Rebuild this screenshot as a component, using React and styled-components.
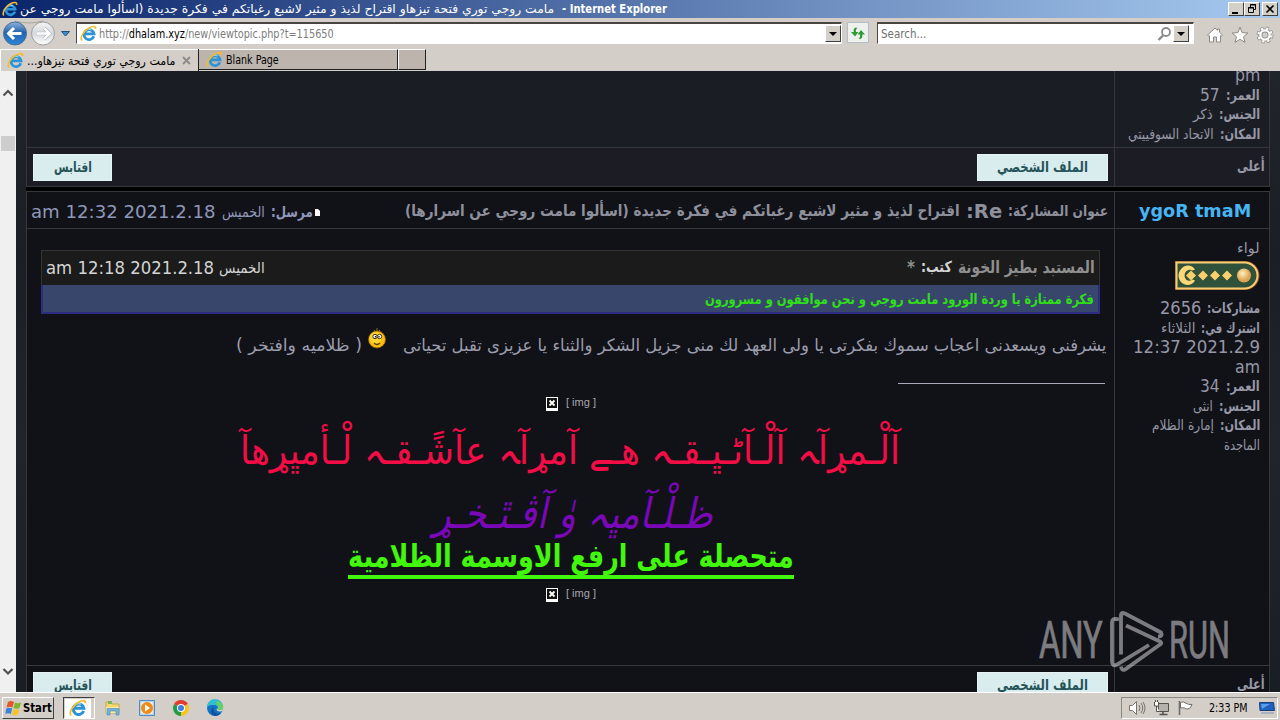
import React, { useLayoutEffect, useRef, useState } from "react";
import styled, { createGlobalStyle } from "styled-components";

const users = [
  { label: "مشاركات:", lw: 53, value: "2656", w: 41, size: 17 },
  { label: "اشترك في:", lw: 59, value: "الثلاثاء", w: 34 },
  { value: "2021.2.9 12:37", w: 127, size: 17 },
  { value: "am", w: 25, size: 17 },
  { label: "العمر:", lw: 34, value: "34", w: 20, size: 17 },
  { label: "الجنس:", lw: 41, value: "انثى", w: 20 },
  { label: "المكان:", lw: 40, value: "إمارة الظلام", w: 62 },
  { value: "الماجدة", w: 36 },
];

const prevUser = [
  { value: "pm", w: 25, size: 17 },
  { label: "العمر:", lw: 34, value: "57", w: 20, size: 17 },
  { label: "الجنس:", lw: 41, value: "ذكر", w: 20 },
  { label: "المكان:", lw: 40, value: "الاتحاد السوفييتي", w: 86 },
];

const App = () => {
  return (
    <>
      <GlobalStyle />
      <Screen>
        <TitleBar />
        <AddressBar />
        <Tabs />
        <View>
          <ScrollBar />
          <Forum>
            <Post $h={76}>
              <Main $bg="#1b1d24" />
              <Side $bg="#1b1d24" $top={-5}>
                <Info rows={prevUser} />
              </Side>
            </Post>
            <PostFooter bg="#1c1d24" h={38} />
            <Separator />
            <PostHeader />
            <Post $h={436}>
              <Main>
                <PostBody />
              </Main>
              <Side $top={9}>
                <SideLine>
                  <Fit w={23} h={20} size={15}>لواء</Fit>
                </SideLine>
                <Rank />
                <Info rows={users} />
              </Side>
            </Post>
            <PostFooter h={27} />
          </Forum>
          <Watermark />
        </View>
        <TaskBar />
      </Screen>
    </>
  );
};

// squeezes or stretches one line of text to a given width
const Fit = ({ w, h, size, dir = "rtl", children, ...rest }) => {
  const ref = useRef(null);
  const [scale, setScale] = useState(1);

  useLayoutEffect(() => {
    setScale(w / ref.current.offsetWidth);
  }, [w, size]);

  return (
    <FitBox $w={w} $h={h} $size={size} {...rest}>
      <FitText ref={ref} dir={dir} style={{ transform: `scaleX(${scale})` }}>
        {children}
      </FitText>
    </FitBox>
  );
};

const TitleBar = () => (
  <Title>
    <IeIcon size={16} />
    <Fit w={534} h={18} size={12}>
      مامت روجي توري فتحة تيزهاو اقتراح لذيذ و مثير لاشبع رغباتكم في فكرة جديدة (اسألوا مامت روجي عن
    </Fit>
    <TitleName>
      <Fit w={105} h={18} size={12} dir="ltr" $bold>- Internet Explorer</Fit>
    </TitleName>
    <WinButtons>
      <WinButton>
        <svg width="14" height="12"><path d="M3 9h6v2H3z" /></svg>
      </WinButton>
      <WinButton>
        <svg width="14" height="12" fill="none" stroke="#000">
          <path d="M5.500 4V1.500h5v5H9M5 2h6" /><path d="M3.500 4.500h5v5h-5zM3 5h6" />
        </svg>
      </WinButton>
      <WinButton $gap>
        <svg width="14" height="12" stroke="#000" strokeWidth="1.6"><path d="M3.500 2.500l7 7M10.500 2.500l-7 7" /></svg>
      </WinButton>
    </WinButtons>
  </Title>
);

const AddressBar = () => (
  <Nav>
    <svg width="74" height="32" viewBox="0 0 74 32">
      <defs>
        <linearGradient id="back" x2="0" y2="1">
          <stop offset="0" stopColor="#8fb4dc" />
          <stop offset=".45" stopColor="#2463ae" />
          <stop offset="1" stopColor="#2d87d8" />
        </linearGradient>
        <linearGradient id="fwd" x2="0" y2="1">
          <stop offset="0" stopColor="#f4f4f4" />
          <stop offset=".5" stopColor="#d5d9dd" />
          <stop offset="1" stopColor="#fff" />
        </linearGradient>
      </defs>
      <path d="M15 3Q29 7 43 3" fill="none" stroke="#aaa59e" />
      <circle cx="15" cy="15.500" r="11.500" fill="url(#back)" stroke="#4d6f98" />
      <path d="M21.500 15.500H9M14 10l-5.500 5.500L14 21" fill="none" stroke="#fff" strokeWidth="3" />
      <circle cx="43" cy="15.500" r="11.500" fill="url(#fwd)" stroke="#9c9d9f" />
      <path d="M36.500 15.500H49M44 10l5.500 5.500L44 21" fill="none" stroke="#b0b4b8" strokeWidth="3.600" />
      <path d="M36.500 15.500H49M44 10l5.500 5.500L44 21" fill="none" stroke="#fff" strokeWidth="2.400" />
      <path d="M61.500 13.500h8l-4 4.500z" fill="#3d8bd0" stroke="#234f7c" />
    </svg>
    <Field $w={766}>
      <IeIcon size={17} />
      <Url>
        <Fit w={235} h={20} size={12} dir="ltr">
          http://<b>dhalam.xyz</b>/new/viewtopic.php?t=115650
        </Fit>
      </Url>
      <DropButton />
    </Field>
    <Refresh>
      <svg width="18" height="18" viewBox="0 0 18 18" fill="#2f9b36">
        <path d="M7 3.500C4.500 4 4.500 6 4.800 8H2l4 4.500L9.500 8H7c-.3-2 0-3 1.500-4z" />
        <path d="M11 15c2.500-.5 2.500-2.500 2.200-4.500H16L12 6 8.500 10.500H11c.3 2 0 3-1.500 4z" />
      </svg>
    </Refresh>
    <Field $w={317}>
      <Search>
        <Fit w={45} h={20} size={12} dir="ltr">Search...</Fit>
      </Search>
      <svg width="16" height="18" viewBox="0 0 16 18" fill="none" stroke="#8b8b8b">
        <circle cx="9" cy="7" r="4" strokeWidth="1.800" />
        <path d="M6 10.500l-4.500 4.500" strokeWidth="2.400" />
      </svg>
      <DropButton />
      <FieldPad />
    </Field>
    <Tools>
      <svg width="18" height="18" viewBox="0 0 18 18">
        <path d="M1.500 9L9 2l2.500 2.300V3h2v3.200L16.500 9l-1.300 1.200-.7-.6V16h-4v-5h-3v5h-4V9.600l-.7.600z" fill="#fff" stroke="#8d8a86" />
      </svg>
      <svg width="18" height="18" viewBox="0 0 18 18">
        <path d="M9 1.200l2.200 5.500 5.600.3-4.300 3.700 1.500 5.700L9 13.300l-5 3.100 1.500-5.700L1.200 7l5.600-.3z" fill="#fff" stroke="#8d8a86" />
      </svg>
      <svg width="18" height="18" viewBox="0 0 18 18">
        <g fill="none">
          <circle cx="9" cy="9" r="6.500" stroke="#8d8a86" strokeWidth="4" strokeDasharray="2.900 2.200" />
          <circle cx="9" cy="9" r="4.600" stroke="#8d8a86" strokeWidth="4" />
          <circle cx="9" cy="9" r="6.500" stroke="#fff" strokeWidth="2.400" strokeDasharray="2.100 3" strokeDashoffset="-.4" />
          <circle cx="9" cy="9" r="4.600" stroke="#fff" strokeWidth="2.300" />
        </g>
      </svg>
    </Tools>
  </Nav>
);

const Tabs = () => (
  <TabRow>
    <Tab $w={198} $active>
      <IeIcon size={17} />
      <TabTitle $w={148}>
        <Fit w={148} h={20} size={12}>مامت روجي توري فتحة تيزهاو...</Fit>
      </TabTitle>
      <svg width="9" height="9" stroke="#8e8a85" strokeWidth="1.900"><path d="M1 1l7 7M8 1L1 8" /></svg>
    </Tab>
    <Tab $w={200}>
      <IeIcon size={17} />
      <TabTitle>
        <Fit w={53} h={20} size={12} dir="ltr">Blank Page</Fit>
      </TabTitle>
    </Tab>
    <Tab $w={28} />
  </TabRow>
);

const ScrollBar = () => (
  <Track>
    <svg width="16" height="16" fill="none" stroke="#505050" strokeWidth="2.200"><path d="M3.500 10.500L8 6l4.500 4.500" /></svg>
    <Thumb />
    <TrackEnd width="16" height="16" fill="none" stroke="#505050" strokeWidth="2.200"><path d="M3.500 6L8 10.500 12.500 6" /></TrackEnd>
  </Track>
);

const Info = ({ rows }) =>
  rows.map((a, i) => (
    <SideLine key={i}>
      <Fit w={a.w} h={19.5} size={a.size || 14}>{a.value}</Fit>
      {a.label && <Fit w={a.lw} h={19.5} size={14} $bold>{a.label}</Fit>}
    </SideLine>
  ));

const PostFooter = ({ bg, h }) => (
  <Post $h={h} $line>
    <Main $bg={bg}>
      <Buttons>
        <Button $w={79}>
          <Fit w={38} h={24} size={14} $bold>اقتابس</Fit>
        </Button>
        <Button $w={131}>
          <Fit w={91} h={24} size={15} $bold>الملف الشخصي</Fit>
        </Button>
      </Buttons>
    </Main>
    <Side $bg={bg} $top={7} $right={4}>
      <SideLine>
        <Fit w={28} h={22} size={15} $bold>أعلى</Fit>
      </SideLine>
    </Side>
  </Post>
);

const PostHeader = () => (
  <Post $h={37} $line>
    <Main>
      <HeadRow>
        <Posted>
          <Fit w={185} h={38} size={18}>2021.2.18 12:32 am</Fit>
          <Fit w={43} h={38} size={15}>الخميس</Fit>
          <Fit w={42} h={38} size={15} $bold>مرسل:</Fit>
          <svg width="6" height="9"><path d="M0 1h3l2 2v5H0z" fill="#fff" /></svg>
        </Posted>
        <Subject>
          <Fit w={100} h={36} size={15} $bold>عنوان المشاركة:</Fit>
          <Fit w={36} h={36} size={19} $bold>Re:</Fit>
          <Fit w={555} h={36} size={16} $bold>
            اقتراح لذيذ و مثير لاشبع رغباتكم في فكرة جديدة (اسألوا مامت روجي عن اسرارها)
          </Fit>
        </Subject>
      </HeadRow>
    </Main>
    <Side $user>
      <Fit w={112} h={38} size={17} dir="ltr" $bold>ygoR tmaM</Fit>
    </Side>
  </Post>
);

const PostBody = () => (
  <Body>
    <Quote>
      <QuoteHead>
        <QuoteDate>
          <Fit w={168} h={34} size={18}>2021.2.18 12:18 am</Fit>
          <Fit w={46} h={34} size={15}>الخميس</Fit>
        </QuoteDate>
        <QuoteAuthor>
          <Fit w={137} h={32} size={17} $bold>المستبد بطيز الخونة</Fit>
          <Wrote>
            <Fit w={31} h={32} size={15} $bold>كتب:</Fit>
          </Wrote>
          <Fit w={8} h={32} size={17} $bold>*</Fit>
        </QuoteAuthor>
      </QuoteHead>
      <QuoteText>
        <Fit w={389} h={28} size={14} $bold>
          فكرة ممتازة يا وردة الورود مامت روجي و نحن موافقون و مسرورون
        </Fit>
      </QuoteText>
    </Quote>
    <Message>
      <Fit w={703} h={30} size={17}>
        يشرفنى ويسعدنى اعجاب سموك بفكرتى يا ولى العهد لك منى جزيل الشكر والثناء يا عزيزى تقبل تحياتى
      </Fit>
      <Smile />
      <Fit w={126} h={30} size={17}>( ظلاميه وافتخر )</Fit>
    </Message>
    <Rule />
    <MissingImage $top={10} />
    <Signature $h={69} $x={240} $top={6} $color="#f20d46">
      <Fit w={660} h={69} size={39}>
        {"آلْـمړآ\u200dہ آلْـآٹـڀـقـہ هـے آمړآ\u200dہ عآشًـقـہ لْـأمڀړهآ"}
      </Fit>
    </Signature>
    <Signature $h={58} $x={433} $color="#7a08b8">
      <Fit w={280} h={58} size={42}><i>ظـلْـآمڀہ وٰ آڤـٿـخـړ</i></Fit>
    </Signature>
    <Signature $h={36} $x={348} $color="#41f70b" $line>
      <Fit w={446} h={26} size={32} $bold>متحصلة على ارفع الاوسمة الظلامية</Fit>
    </Signature>
    <MissingImage $top={6} />
  </Body>
);

const MissingImage = ({ $top }) => (
  <Missing $top={$top}>
    <svg width="12" height="14">
      <path d="M0 0h12v14H0z" fill="#fff" />
      <path d="M1 1h10v10H1z" fill="#111" />
      <path d="M3.500 3.500l5 5M8.500 3.500l-5 5" stroke="#fff" strokeWidth="1.800" />
    </svg>
    <Fit w={30} h={16} size={11} dir="ltr">[ img ]</Fit>
  </Missing>
);

const Smile = () => (
  <SmileSvg width="20" height="22" viewBox="0 0 20 22">
    <path d="M7 3l1.500 1.500M10 1v3M13 3l-1.500 1.500" stroke="#8f6c1b" />
    <circle cx="10" cy="12.500" r="8.500" fill="#f8bb10" stroke="#8a5b08" strokeWidth=".7" />
    <circle cx="8.500" cy="11" r="6" fill="#ffe13c" opacity=".7" />
    <circle cx="8" cy="9.500" r="2.200" fill="#fff" stroke="#43320e" />
    <circle cx="12.500" cy="9.500" r="2.200" fill="#fff" stroke="#43320e" />
    <path d="M8.500 9v1.500M12 9v1.500" stroke="#222" strokeWidth="1.300" />
    <path d="M7 16q3 3 6 0" fill="none" stroke="#60400a" strokeWidth="1.300" />
  </SmileSvg>
);

const Rank = () => (
  <RankSvg width="85" height="29" viewBox="0 0 85 29">
    <defs>
      <radialGradient id="ball" cx=".4" cy=".35">
        <stop offset="0" stopColor="#fff0bd" />
        <stop offset="1" stopColor="#dda552" />
      </radialGradient>
    </defs>
    <path d="M0 0h70a14 14 0 0 1 0 29H0z" fill="#8a4a1f" />
    <path d="M1.500 1.500h68a13 13 0 0 1 0 26h-68z" fill="#31523a" stroke="#f9cd74" strokeWidth="2" />
    <path d="M20 8.500C17 3.500 10 3.500 6.500 7.500c-4 4.500-4 10 0 14 4 4 11 3 13.500-2l-2.500-1c-2.500 2-6 1.500-7-1-1.500-2-1-6 1-7.500 2-1.500 4.500-1.500 6-.5z" fill="#fbd877" />
    <path d="M16 9.500l5 5-5 5-5-5zM28 9.500l5 5-5 5-5-5zM40 9.500l5 5-5 5-5-5zM52 9.500l5 5-5 5-5-5z" fill="#fbd06c" />
    <circle cx="69" cy="14.500" r="7" fill="url(#ball)" />
  </RankSvg>
);

const IeIcon = ({ size }) => (
  <svg width={size} height={size} viewBox="0 0 17 17" fill="none">
    <path d="M13.800 11.300A5 5 0 1 1 14 8.800H5" stroke="#2b93d8" strokeWidth="2.800" />
    <path d="M5.500 5.500Q8 3.300 11.500 5" stroke="#8fd5f7" strokeWidth="1.200" />
    <path d="M2 15.500C-.5 12.500 4 5.500 9 3c4-2.200 7-2 6.500 1" stroke="#f1bd2b" strokeWidth="1.700" />
  </svg>
);

const Watermark = () => (
  <Mark>
    <Fit w={64} h={62} size={52} dir="ltr">ANY</Fit>
    <svg width="56" height="64" viewBox="0 0 56 64" fill="none" stroke="currentColor" strokeWidth="3.800">
      <path d="M9 11V9Q4 8 4 12.500V51q0 6 5 3.500L41 35M13 44.500V5q0-3 4-1.500L53 22.500q2 4-3 4M18 15.500l34 16q2.500 1.500 0 3L17 59.500q-3.500 1.500-4-3" />
    </svg>
    <Fit w={61} h={62} size={52} dir="ltr">RUN</Fit>
  </Mark>
);

const TaskBar = () => (
  <Task>
    <Start>
      <svg width="17" height="16" viewBox="0 0 17 16">
        <path d="M3 2q3-2 6 0L7.500 7.500q-3-1.500-6 0z" fill="#e4572a" />
        <path d="M10 2.500q3 1.500 6 0L14.500 8q-3 1.500-6 0z" fill="#7db52f" />
        <path d="M1.200 8.500q3-1.500 6 0L5.800 14q-3-1.500-5.500 0z" fill="#3a83d6" />
        <path d="M8.300 9q3 1.500 6 0L13 14.500q-3 1.500-6 0z" fill="#f7c325" />
      </svg>
      <Fit w={29} h={18} size={12} dir="ltr" $bold>Start</Fit>
    </Start>
    <Running>
      <RunningInner><IeIcon size={18} /></RunningInner>
    </Running>
    <Launch>
      <svg width="18" height="18" viewBox="0 0 18 18">
        <path d="M2 3h5l1 2h7v9H2z" fill="#f3d873" stroke="#c6a84a" />
        <path d="M4 2h4v3H4z" fill="#74b956" />
        <path d="M2 8h13v6H2z" fill="#fae9a0" />
        <path d="M3 9.500h12V16h-3v-4H6v4H3z" fill="#72b3dc" stroke="#4b88b4" strokeWidth=".6" />
      </svg>
      <svg width="18" height="18" viewBox="0 0 18 18">
        <path d="M1.500 1.500h15v15h-15z" fill="#b6d5ef" stroke="#4f89bd" />
        <path d="M3.500 3.500h11v11h-11z" fill="#fff" />
        <circle cx="9" cy="9" r="6" fill="#f28b16" />
        <path d="M7 5.500L12 9l-5 3.500z" fill="#fff" />
      </svg>
      <svg width="18" height="18" viewBox="0 0 18 18">
        <path d="M9 9L2.100 5A8 8 0 0 1 15.900 5z" fill="#df3d30" />
        <path d="M9 9l6.900-4A8 8 0 0 1 9 17z" fill="#f8c51d" />
        <path d="M9 9v8A8 8 0 0 1 2.100 5z" fill="#27994a" />
        <circle cx="9" cy="9" r="4" fill="#fff" />
        <circle cx="9" cy="9" r="3" fill="#3d7de4" />
      </svg>
      <svg width="18" height="18" viewBox="0 0 18 18">
        <circle cx="9" cy="9" r="8" fill="#1572c4" />
        <path d="M1 8a8 8 0 0 1 16 0c1 4-4 5-6 3 2-3 0-5-3-5-3-.2-5 0-7 2z" fill="#35bdd0" />
        <path d="M11 2c4 1 7 4 6 7s-4 3-6 2c2-3 1-5-1-6z" fill="#67cf65" />
        <path d="M8 8c-2 4 2 8 7 6-1.500 2-4 3-6 3-4-1-6-6-1-9z" fill="#0d529c" />
        <path d="M17.500 11c-2 2-5 2-6.500.5-1-1 0-1.500 0-2.500 0 2 3 3 6.500 1z" fill="#d4d0c8" />
      </svg>
    </Launch>
    <Tray>
      <svg width="18" height="16" viewBox="0 0 18 16" fill="none" stroke="#77736d">
        <path d="M1.500 5.500h3l4-4v13l-4-4h-3z" fill="#fff" />
        <path d="M11 5q2 3 0 6M13 3q3.500 5 0 10M15 2q4 6 0 12" />
      </svg>
      <svg width="17" height="16" viewBox="0 0 17 16" fill="none" stroke="#55524e">
        <path d="M5.500 3.500h10v8h-10z" fill="#b4b1ad" />
        <path d="M6.500 14.500h8M10 12v2" strokeWidth="1.600" />
        <path d="M1.500 2v4h4V2M2.500 0v2M4.500 0v2M3.500 6v5.500h3" fill="#fff" />
      </svg>
      <svg width="17" height="16" viewBox="0 0 17 16" stroke="#716d68">
        <path d="M2.500 1v14" strokeWidth="1.600" />
        <path d="M3.500 2.500q3-1.500 5 .5 3 2 6.500 1.500-1 4-4 4.500-2 .3-3.500-1-2-.5-4 0z" fill="#fff" />
      </svg>
      <Clock><Fit w={39} h={18} size={12} dir="ltr">2:33 PM</Fit></Clock>
      <svg width="16" height="14" viewBox="0 0 16 14">
        <path d="M.5 1.500h14l1 8H1z" fill="#1f5fc0" stroke="#16407e" />
        <path d="M2 3h9L3 8z" fill="#5b9cec" />
        <path d="M2 12h13" stroke="#7c95ba" />
      </svg>
    </Tray>
  </Task>
);

const GlobalStyle = createGlobalStyle`
  * { box-sizing: border-box; }
  body { margin: 0; background: #111118; }
  svg { display: block; flex: none; }
`;

const Screen = styled.div`
  width: 1280px;
  height: 720px;
  overflow: hidden;
  display: flex;
  flex-direction: column;
  background: #d4d0c8;
  font-family: "DejaVu Sans", sans-serif;
`;

const FitBox = styled.span`
  display: block;
  flex: none;
  direction: ltr;
  text-align: left;
  width: ${(p) => p.$w}px;
  height: ${(p) => p.$h}px;
  line-height: ${(p) => p.$h}px;
  font-size: ${(p) => p.$size}px;
  font-weight: ${(p) => (p.$bold ? 700 : 400)};
  white-space: nowrap;
`;

const FitText = styled.span`
  display: inline-block;
  transform-origin: 0 50%;
  b { font-weight: 400; color: #000; }
`;

const Title = styled.div`
  height: 18px;
  flex: none;
  display: flex;
  align-items: center;
  padding: 0 2px 0 2px;
  gap: 2px;
  color: #fff;
  background: linear-gradient(90deg, #0a246a, #a6caf0);
`;

const TitleName = styled.div`
  padding-left: 6px;
  font-family: "DejaVu Sans Condensed", sans-serif;
`;

const WinButtons = styled.div`
  display: flex;
  margin-left: auto;
`;

const WinButton = styled.div`
  width: 16px;
  height: 14px;
  margin-left: ${(p) => (p.$gap ? 2 : 0)}px;
  background: #d4d0c8;
  border: 1px solid;
  border-color: #fff #404040 #404040 #fff;
`;

const Nav = styled.div`
  height: 32px;
  flex: none;
  display: flex;
  align-items: flex-start;
  padding: 0 6px 0 0;
  background: #d4cec8;
  font-family: "DejaVu Sans Condensed", sans-serif;
`;

const Field = styled.div`
  width: ${(p) => p.$w}px;
  height: 22px;
  margin: 4px 0 0 2px;
  padding-left: 3px;
  display: flex;
  align-items: center;
  background: #fff;
  border: 1px solid;
  border-top: 2px solid #494542;
  border-color: #494542 #fff #fff #494542;
`;

const Url = styled.div`
  flex: 1;
  padding-left: 2px;
  color: #7c7c7c;
`;

const Search = styled.div`
  flex: 1;
  color: #707070;
`;

const DropButton = styled.div`
  width: 16px;
  height: 17px;
  background: #d4d0c8;
  border: 1px solid;
  border-color: #fff #404040 #404040 #fff;
  display: flex;
  align-items: center;
  justify-content: center;
  &::after {
    content: "";
    border: 4px solid transparent;
    border-top-color: #000;
    border-bottom: 0;
  }
`;

const FieldPad = styled.div`
  width: 4px;
`;

const Refresh = styled.div`
  width: 22px;
  height: 21px;
  margin: 4px 6px 0 5px;
  display: flex;
  align-items: center;
  justify-content: center;
  background: #eef0ee;
  border: 1px solid #b4bcc6;
`;

const Tools = styled.div`
  display: flex;
  gap: 7px;
  margin: 8px 0 0 auto;
`;

const TabRow = styled.div`
  height: 21px;
  flex: none;
  display: flex;
  background: #d4cec8;
  font-family: "DejaVu Sans Condensed", sans-serif;
`;

const Tab = styled.div`
  width: ${(p) => p.$w}px;
  height: ${(p) => (p.$active ? 22 : 21)}px;
  margin-top: -1px;
  padding-left: ${(p) => (p.$active ? 6 : 7)}px;
  display: flex;
  align-items: center;
  background: ${(p) => (p.$active ? "#d4cec8" : "#bcb4ad")};
  border-style: solid;
  border-width: 1px ${(p) => (p.$active ? 0 : 1)}px ${(p) => (p.$active ? 0 : 1)}px 1px;
  border-color: #fff #222 #222 #fff;
  box-shadow: ${(p) => (p.$active ? "1px 0 #222" : "none")};
  z-index: ${(p) => (p.$active ? 1 : 0)};
`;

const TabTitle = styled.div`
  padding-left: 3px;
  margin-right: 7px;
  width: ${(p) => (p.$w ? p.$w + 3 + "px" : "auto")};
`;

const View = styled.div`
  position: relative;
  height: 621px;
  flex: none;
  display: flex;
  overflow: hidden;
  background: linear-gradient(180deg, #20242b, #1b1e25 30%, #22242b 60%, #191e25);
`;

const Track = styled.div`
  width: 16px;
  height: 621px;
  padding: 14px 0 13px;
  display: flex;
  flex-direction: column;
  background: #f0f0f0;
`;

const Thumb = styled.div`
  width: 14px;
  height: 15px;
  margin: 35px 1px 0;
  background: #cdcdcd;
`;

const TrackEnd = styled.svg`
  margin-top: auto;
`;

const Forum = styled.div`
  width: 1244px;
  margin-left: 10px;
  flex: none;
  color: #9b9dac;
`;

const Post = styled.div`
  height: ${(p) => p.$h}px;
  display: flex;
  border-top: ${(p) => (p.$line ? "1px solid #36373d" : "0")};
  overflow: hidden;
  & + & {
    box-sizing: content-box;
    border-top: 1px solid #36373d;
  }
`;

const Main = styled.div`
  width: 1088px;
  flex: none;
  background: ${(p) => p.$bg || "#111118"};
  border-left: 1px solid #36373d;
`;

const Side = styled.div`
  width: 156px;
  flex: none;
  display: flex;
  flex-direction: column;
  align-items: ${(p) => (p.$user ? "center" : "flex-end")};
  padding: ${(p) => (p.$user ? "0 0 0 5px" : `0 ${p.$right || 9}px 0 0`)};
  background: ${(p) => p.$bg || "#111118"};
  border: solid #36373d;
  border-width: 0 1px;
  color: ${(p) => (p.$user ? "#46b5f2" : "#9698a6")};
  &::before {
    content: "";
    flex: none;
    height: ${(p) => Math.max(p.$top || 0, 0)}px;
    margin-top: ${(p) => Math.min(p.$top || 0, 0)}px;
  }
`;

const SideLine = styled.div`
  display: flex;
  gap: 6px;
`;

const Separator = styled.div`
  height: 5px;
  background: #000;
  border-top: 1px solid #36373d;
`;

const Buttons = styled.div`
  display: flex;
  justify-content: space-between;
  padding: 6px 6px 0;
`;

const Button = styled.div`
  width: ${(p) => p.$w}px;
  height: 27px;
  flex: none;
  display: flex;
  justify-content: center;
  background: #d9ecee;
  border: 1px solid #e6f2f3;
  color: #255459;
`;

const HeadRow = styled.div`
  display: flex;
  justify-content: space-between;
  padding: 1px 6px 0 4px;
`;

const Posted = styled.div`
  display: flex;
  align-items: center;
  gap: 6px;
  color: #8f98b8;
  svg { margin-left: -4px; }
`;

const Subject = styled.div`
  display: flex;
  direction: rtl;
  gap: 6px;
  color: #8e909b;
`;

const Body = styled.div`
  padding: 21px 0 0 14px;
`;

const Quote = styled.div`
  width: 1059px;
  height: 64px;
  border: 1px solid #35352f;
  background: #1b1b1b;
`;

const QuoteHead = styled.div`
  height: 34px;
  display: flex;
  justify-content: space-between;
  padding: 0 4px;
  color: #8f8f8f;
`;

const QuoteDate = styled.div`
  display: flex;
  gap: 5px;
  color: #d4d4d4;
  font-family: "DejaVu Sans Condensed", sans-serif;
`;

const QuoteAuthor = styled.div`
  display: flex;
  direction: rtl;
  gap: 6px;
`;

const Wrote = styled.div`
  color: #d4d4d4;
`;

const QuoteText = styled.div`
  height: 29px;
  margin: 0 -1px;
  padding-right: 4px;
  display: flex;
  justify-content: flex-end;
  background: #38466c;
  border: 2px solid #2c2c80;
  border-top: 0;
  color: #2fe016;
`;

const Message = styled.div`
  display: flex;
  direction: rtl;
  padding-right: 8px;
  margin-top: 16px;
  height: 30px;
`;

const SmileSvg = styled.svg`
  margin: -3px 16px 0 5px;
`;

const Rule = styled.div`
  width: 207px;
  height: 1px;
  margin: 23px 0 0 857px;
  background: #a9abb8;
`;

const Missing = styled.div`
  display: flex;
  align-items: center;
  gap: 8px;
  height: 16px;
  margin: ${(p) => p.$top}px 0 0 505px;
  color: #a8a8ad;
  font-family: "Liberation Sans", sans-serif;
  svg { margin-top: 3px; }
`;

const Signature = styled.div`
  height: ${(p) => p.$h}px;
  width: fit-content;
  margin: ${(p) => p.$top || 0}px 0 0 ${(p) => p.$x - 41}px;
  color: ${(p) => p.$color};
  border-bottom: ${(p) => (p.$line ? "4px solid #41f70b" : "0")};
`;

const RankSvg = styled.svg`
  margin: 3px 0 9px;
`;

const Mark = styled.div`
  position: absolute;
  left: 1039px;
  top: 539px;
  display: flex;
  gap: 5px;
  color: #fff;
  opacity: 0.45;
  font-family: Roboto, sans-serif;
  -webkit-text-stroke: 0.6px #fff;
`;

const Task = styled.div`
  height: 28px;
  flex: none;
  display: flex;
  align-items: center;
  padding: 3px 2px 1px;
  border-top: 1px solid #fff;
  background: #d4cec8;
`;

const Start = styled.div`
  width: 52px;
  height: 22px;
  display: flex;
  align-items: center;
  gap: 1px;
  padding-left: 2px;
  border: 1px solid;
  border-color: #fff #404040 #404040 #fff;
  font-family: "DejaVu Sans Condensed", sans-serif;
`;

const Running = styled.div`
  width: 32px;
  height: 22px;
  margin-left: 9px;
  padding: 1px 3px 0 1px;
  background: #d4d0c8;
  border: 1px solid;
  border-color: #404040 #fff #fff #404040;
`;

const RunningInner = styled.div`
  height: 19px;
  background: #fff;
  display: flex;
  justify-content: center;
`;

const Launch = styled.div`
  display: flex;
  gap: 16px;
  margin-left: 9px;
`;

const Tray = styled.div`
  width: 157px;
  height: 22px;
  margin-left: auto;
  padding: 0 2px 0 6px;
  display: flex;
  align-items: center;
  gap: 7px;
  border: 1px solid;
  border-color: #8b8783 #fff #fff #8b8783;
`;

const Clock = styled.div`
  flex: 1;
  padding-left: 8px;
  color: #000;
  font-family: "DejaVu Sans Condensed", sans-serif;
`;

export default App;
